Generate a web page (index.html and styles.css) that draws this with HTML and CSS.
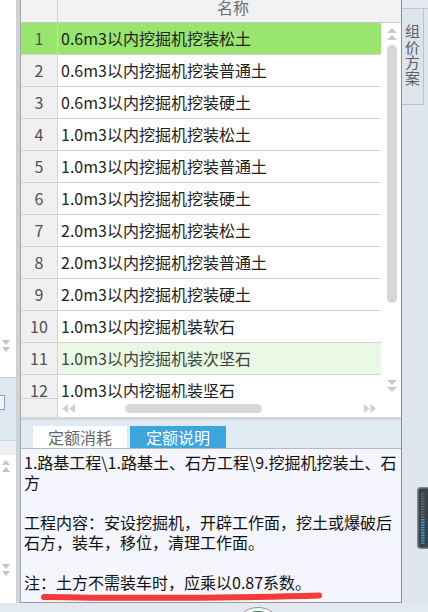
FILE: index.html
```html
<!DOCTYPE html>
<html lang="zh-CN">
<head>
<meta charset="utf-8">
<title>定额</title>
<link rel="stylesheet" href="styles.css">
</head>
<body>
<div class="app">
  <div class="main">
    <div class="lstrip">
      <div class="ls-a">
        <svg class="dbl" width="8" height="12" viewBox="0 0 8 12"><polygon points="0,0 8,0 4,5"/><polygon points="0,7 8,7 4,12"/></svg>
      </div>
      <div class="ls-b"><div class="ls-box"></div></div>
      <div class="ls-c"></div>
      <div class="ls-d">
        <svg class="dbl up1" width="8" height="12" viewBox="0 0 8 12"><polygon points="4,0 8,5 0,5"/><polygon points="4,7 8,12 0,12"/></svg>
        <svg class="dbl dn1" width="8" height="12" viewBox="0 0 8 12"><polygon points="0,0 8,0 4,5"/><polygon points="0,7 8,7 4,12"/></svg>
      </div>
    </div>
    <div class="gutter"></div>
    <div class="panel">
      <div class="grid-head">
        <div class="hnum"></div>
        <div class="hname"><span>名称</span></div>
      </div>
      <div class="grid-body">
        <div class="rows">
          <div class="row sel"><div class="num">1</div><div class="name">0.6m3以内挖掘机挖装松土</div></div>
          <div class="row"><div class="num">2</div><div class="name">0.6m3以内挖掘机挖装普通土</div></div>
          <div class="row"><div class="num">3</div><div class="name">0.6m3以内挖掘机挖装硬土</div></div>
          <div class="row"><div class="num">4</div><div class="name">1.0m3以内挖掘机挖装松土</div></div>
          <div class="row"><div class="num">5</div><div class="name">1.0m3以内挖掘机挖装普通土</div></div>
          <div class="row"><div class="num">6</div><div class="name">1.0m3以内挖掘机挖装硬土</div></div>
          <div class="row"><div class="num">7</div><div class="name">2.0m3以内挖掘机挖装松土</div></div>
          <div class="row"><div class="num">8</div><div class="name">2.0m3以内挖掘机挖装普通土</div></div>
          <div class="row"><div class="num">9</div><div class="name">2.0m3以内挖掘机挖装硬土</div></div>
          <div class="row"><div class="num">10</div><div class="name">1.0m3以内挖掘机装软石</div></div>
          <div class="row hover"><div class="num">11</div><div class="name">1.0m3以内挖掘机装次坚石</div></div>
          <div class="row"><div class="num">12</div><div class="name">1.0m3以内挖掘机装坚石</div></div>
        </div>
        <div class="vscroll">
          <svg class="varrow" width="10" height="12" viewBox="0 0 10 12"><polygon points="5,0 10,5 0,5"/><polygon points="5,7 10,12 0,12"/></svg>
          <div class="vthumb"></div>
          <svg class="varrow dn" width="10" height="12" viewBox="0 0 10 12"><polygon points="0,0 10,0 5,5"/><polygon points="0,7 10,7 5,12"/></svg>
        </div>
      </div>
      <div class="hscroll">
        <div class="hs-num"></div>
        <div class="hs-track">
          <svg class="harrow" width="13" height="9" viewBox="0 0 13 9"><polygon points="6,0 6,9 0,4.5"/><polygon points="13,0 13,9 7,4.5"/></svg>
          <div class="hthumb"></div>
          <svg class="harrow r" width="12" height="9" viewBox="0 0 12 9"><polygon points="0,0 0,9 5.5,4.5"/><polygon points="6.5,0 6.5,9 12,4.5"/></svg>
        </div>
      </div>
      <div class="tabs">
        <div class="tab">定额消耗</div>
        <div class="tab active">定额说明</div>
      </div>
      <div class="desc">
        <div class="para"><div class="ln">1.路基工程\1.路基土、石方工程\9.挖掘机挖装土、石</div><div class="ln">方</div></div>
        <div class="para"><div class="ln">工程内容：安设挖掘机，开辟工作面，挖土或爆破后</div><div class="ln">石方，装车，移位，清理工作面。</div></div>
        <div class="para"><div class="ln">注：土方不需装车时，应乘以0.87系数。</div></div>
        <svg class="mark" width="380" height="153" viewBox="0 0 380 153"><path d="M23 148 C 100 149.5, 220 149, 298 146.5" fill="none" stroke="#f23b3b" stroke-width="6" stroke-linecap="round"/></svg>
      </div>
    </div>
    <div class="rpanel">
      <div class="rp-top"></div>
      <div class="rp-tab">组价方案</div>
      <div class="meter">
        <svg width="11" height="62" viewBox="0 0 11 62">
          <rect x="0.75" y="0.75" width="16" height="60.5" rx="3" fill="#3b4248" stroke="#7d858d" stroke-width="1.5"/>
          <g fill="#5f666d">
            <rect x="4" y="6" width="3.5" height="1.4"/><rect x="4" y="8.6" width="3.5" height="1.4"/><rect x="4" y="11.2" width="3.5" height="1.4"/><rect x="4" y="13.8" width="3.5" height="1.4"/><rect x="4" y="16.4" width="3.5" height="1.4"/><rect x="4" y="19" width="3.5" height="1.4"/><rect x="4" y="21.6" width="3.5" height="1.4"/><rect x="4" y="24.2" width="3.5" height="1.4"/><rect x="4" y="26.8" width="3.5" height="1.4"/><rect x="4" y="29.4" width="3.5" height="1.4"/>
          </g>
          <g fill="#2f9fe0">
            <rect x="4" y="32" width="3.5" height="1.4"/><rect x="4" y="34.6" width="3.5" height="1.4"/><rect x="4" y="37.2" width="3.5" height="1.4"/><rect x="4" y="39.8" width="3.5" height="1.4"/><rect x="4" y="42.4" width="3.5" height="1.4"/><rect x="4" y="45" width="3.5" height="1.4"/><rect x="4" y="47.6" width="3.5" height="1.4"/><rect x="4" y="50.2" width="3.5" height="1.4"/><rect x="4" y="52.8" width="3.5" height="1.4"/><rect x="4" y="55.4" width="3.5" height="1.4"/>
          </g>
        </svg>
      </div>
    </div>
  </div>
  <div class="bbar">
    <svg class="logo" width="50" height="50" viewBox="0 0 50 50"><circle cx="25" cy="25" r="24.5" fill="#ffffff" stroke="#8f969d" stroke-width="1"/><circle cx="25" cy="25" r="21" fill="#2e7b4e"/></svg>
  </div>
</div>
</body>
</html>
```

FILE: styles.css
```css
* { box-sizing: border-box; }
html, body { margin: 0; padding: 0; }
body {
  width: 428px;
  height: 612px;
  overflow: hidden;
  background: #e2e9ef;
  font-family: "Noto Sans CJK SC", "Noto Sans", sans-serif;
  font-size: 16px;
}
.app { display: flex; flex-direction: column; width: 428px; height: 612px; }
.main { display: flex; height: 603px; }

/* left strip */
.lstrip { width: 16px; display: flex; flex-direction: column; }
.ls-a {
  height: 377px; background: #ffffff;
  display: flex; flex-direction: column; justify-content: flex-end;
  padding-bottom: 25px;
}
.dbl { display: block; margin-left: 2px; fill: #c4c4c4; }
.ls-b {
  height: 63px; background: #dde8f1; border-top: 1px solid #c6cdd4;
  padding-top: 17px;
}
.ls-box {
  width: 5px; height: 15px; background: #eef4f9;
  border: 1px solid #8ba5bd; border-left: none;
}
.ls-c { height: 15px; background: #edf0f3; border-top: 1px solid #d2d8de; }
.ls-d { flex: 1; background: #ffffff; display: flex; flex-direction: column; }
.up1 { margin-top: 5px; }
.dn1 { margin-top: 92px; }

.gutter { width: 5px; background: #cdd2d7; border-right: 1px solid #a3a7ab; }

/* main panel */
.panel {
  width: 381px; display: flex; flex-direction: column;
  border-right: 1px solid #8c9095; background: #ffffff;
}
.grid-head {
  height: 23px; display: flex; background: #f2f2f2;
  border-bottom: 1px solid #c9c9c9; overflow: hidden;
}
.hnum { width: 37px; border-right: 1px solid #d2d2d2; }
.hname { flex: 1; padding-left: 159px; color: #6e6e6e; line-height: 14px; }

.grid-body { height: 375px; display: flex; }
.rows { width: 360px; height: 375px; overflow: hidden; }
.row { display: flex; height: 32px; border-bottom: 1px solid #d3d3d3; line-height: 31px; }
.num {
  width: 37px; background: #f0f0f0; border-right: 1px solid #d3d3d3;
  text-align: center; color: #505050;
}
.name { flex: 1; padding-left: 3px; color: #222222; white-space: nowrap; }
.row.sel .num, .row.sel .name { background: #99e570; }
.row.hover .name { background: #ebf8e6; color: #3a463a; }

.vscroll { width: 20px; display: flex; flex-direction: column; align-items: center; background: #ffffff; }
.varrow { display: block; margin-top: 5px; fill: #c9c9c9; margin-left: 1px; }
.vthumb { width: 10px; height: 258px; margin-top: 5px; margin-left: 1px; border-radius: 5px; background: #d7d7d7; }
.varrow.dn { margin-top: 77px; }

.hscroll { height: 19px; display: flex; }
.hs-num { width: 37px; background: #f0f0f0; border-top: 1px solid #d3d3d3; border-right: 1px solid #d3d3d3; }
.hs-track { flex: 1; display: flex; align-items: center; padding-left: 4px; padding-top: 1px; background: #ffffff; }
.harrow { display: block; fill: #d0d0d0; }
.hthumb { width: 137px; height: 9px; margin-left: 50px; border-radius: 5px; background: #d8d8d8; }
.harrow.r { margin-left: 102px; }

.tabs {
  height: 32px; display: flex; gap: 3px;
  padding: 6px 0 0 12px;
  background: #e0eaf2;
  border-top: 3px solid #d3d7db;
  border-bottom: 1px solid #b2bac2;
}
.tab {
  height: 22px; line-height: 22px; width: 94px; text-align: center;
  background: #ffffff; color: #666666;
}
.tab.active { width: 96px; background: #3da7dd; color: #ffffff; }

.desc {
  position: relative;
  height: 154px;
  padding: 3px 0 0 3px;
  background: #f5f6fd;
  border-bottom: 1px solid #9c9c9c;
  color: #111111;
  line-height: 20px;
}
.para { margin-bottom: 20px; }
.ln { white-space: nowrap; }
.mark { position: absolute; left: 0; top: 0; pointer-events: none; }

/* right panel */
.rpanel { width: 26px; background: #dfe6ed; display: flex; flex-direction: column; }
.rp-top { height: 9px; background: #e5ebf0; border-bottom: 1px solid #bcc7d2; }
.rp-tab {
  width: 22px; height: 96px;
  border-right: 1px solid #b8c3ce; border-bottom: 1px solid #b8c3ce;
  background: #dde5ec;
  padding-top: 15px;
  writing-mode: vertical-rl;
  font-size: 15px; line-height: 21px; letter-spacing: 0.5px;
  color: #5e5e5e;
}
.meter { margin-top: 382px; margin-left: 15px; width: 11px; height: 62px; overflow: hidden; }
.meter svg { display: block; }

.bbar { height: 9px; overflow: hidden; padding-left: 233px; background: #e2e9ef; }
.logo { display: block; margin-top: 4px; }
```
